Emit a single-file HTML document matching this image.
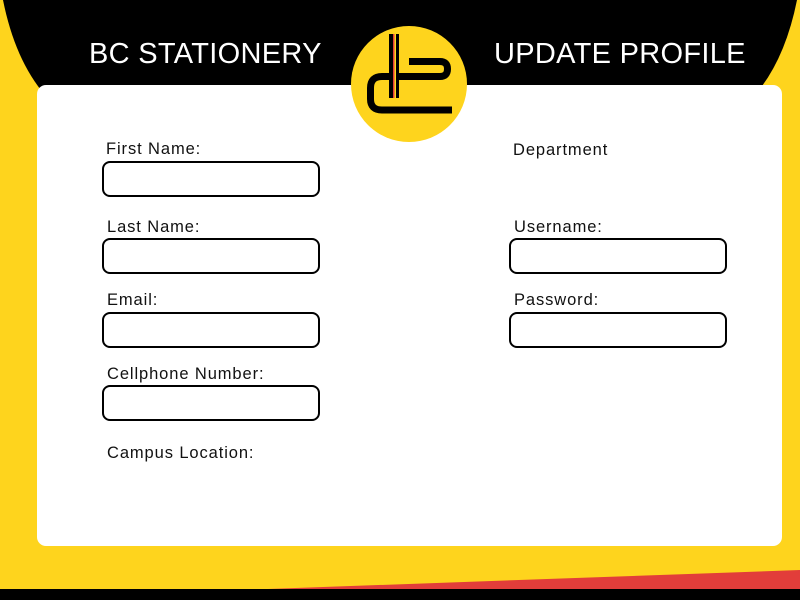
<!DOCTYPE html>
<html><head><style>
body{margin:0;width:800px;height:600px;overflow:hidden;background:#fed41d;font-family:"Liberation Sans",sans-serif;position:relative}
.card{position:absolute;left:37px;top:85px;width:745px;height:461px;background:#fff;border-radius:9px}
.lbl{position:absolute;font-size:16.5px;color:#111;letter-spacing:0.9px;white-space:nowrap}
.inp{position:absolute;width:214px;height:32px;border:2px solid #000;border-radius:8px;background:#fff;box-sizing:content-box}
.title{position:absolute;top:38px;color:#fff;font-size:29px;letter-spacing:0.3px;white-space:nowrap}
</style></head><body>
<svg style="position:absolute;left:0;top:0" width="800" height="600">
<path d="M3,0 Q15,60 45,95 L755,95 Q785,60 797,0 Z" fill="#000"/>
<polygon points="240,590 800,570 800,590" fill="#e23d3a"/>
<rect x="0" y="589" width="800" height="11" fill="#000"/>
</svg>
<div class="card"></div>
<div class="title" style="left:89px">BC STATIONERY</div>
<div class="title" style="left:494px">UPDATE PROFILE</div>
<svg style="position:absolute;left:0;top:0" width="800" height="160">
<circle cx="409" cy="84" r="58" fill="#fed41d"/>
<path d="M409,61.5 L440,61.5 Q447.5,61.5 447.5,69 Q447.5,76.5 440,76.5 L382,76.5 Q370.5,76.5 370.5,88 L370.5,99 Q370.5,110 382,110 L452,110" fill="none" stroke="#000" stroke-width="7"/>
<rect x="389" y="34" width="4" height="64" fill="#000"/>
<rect x="393" y="34" width="1.5" height="64" fill="#e23d3a"/>
<rect x="394.5" y="34" width="1.5" height="64" fill="#fed41d"/>
<rect x="396" y="34" width="3" height="64" fill="#000"/>
</svg>
<div class="lbl" style="left:106px;top:140px">First Name:</div>
<div class="inp" style="left:102px;top:161px"></div>
<div class="lbl" style="left:107px;top:218px">Last Name:</div>
<div class="inp" style="left:102px;top:238px"></div>
<div class="lbl" style="left:107px;top:291px">Email:</div>
<div class="inp" style="left:102px;top:312px"></div>
<div class="lbl" style="left:107px;top:365px">Cellphone Number:</div>
<div class="inp" style="left:102px;top:385px"></div>
<div class="lbl" style="left:107px;top:444px">Campus Location:</div>
<div class="lbl" style="left:513px;top:141px">Department</div>
<div class="lbl" style="left:514px;top:218px">Username:</div>
<div class="inp" style="left:509px;top:238px"></div>
<div class="lbl" style="left:514px;top:291px">Password:</div>
<div class="inp" style="left:509px;top:312px"></div>
</body></html>
